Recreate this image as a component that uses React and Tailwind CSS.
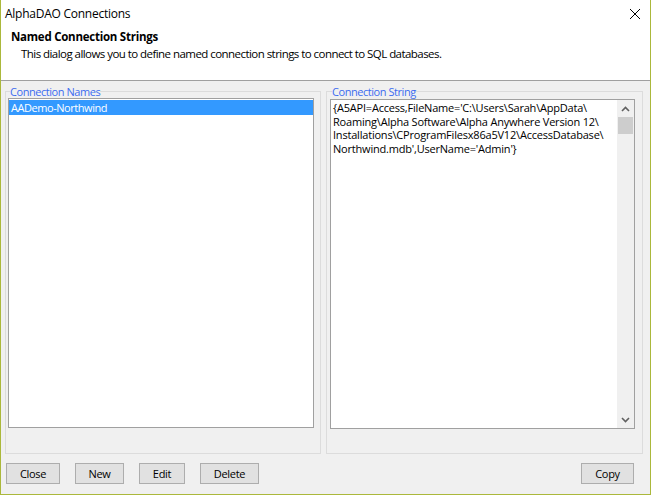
import React from "react";

const font = { fontFamily: '"Open Sans", "Noto Sans", sans-serif' };

// Connection string is shown pre-wrapped, the same way the edit control breaks it
const connLines = [
  "{A5API=Access,FileName='C:\\Users\\Sarah\\AppData\\",
  "Roaming\\Alpha Software\\Alpha Anywhere Version 12\\",
  "Installations\\CProgramFilesx86a5V12\\AccessDatabase\\",
  "Northwind.mdb',UserName='Admin'}",
];

const Chevron = ({ down }) => (
  <svg width="9" height="6" viewBox="0 0 9 6" className="block">
    <polyline
      points={down ? "1,1 4.5,4.5 8,1" : "1,5 4.5,1.5 8,5"}
      fill="none"
      stroke="#606060"
      strokeWidth="1.6"
    />
  </svg>
);

const Button = ({ label, width }) => (
  <button
    className={`h-[21px] ${width} bg-[#e1e1e1] border border-[#adadad] text-[11px] tracking-[-0.3px] text-black leading-none`}
  >
    {label}
  </button>
);

const App = () => {
  return (
    <div
      className="w-[651px] h-[495px] bg-[#f0f0f0] border-l border-r border-b border-[#abb83b] flex flex-col text-black overflow-hidden"
      style={font}
    >
      {/* Header */}
      <div className="h-[81px] bg-white border-b border-[#a0a0a0] shrink-0">
        <div className="flex items-center justify-between h-[27px] pl-[4px] pr-[9px]">
          <span className="text-[12px] tracking-[-0.25px]">AlphaDAO Connections</span>
          <svg width="12" height="12" viewBox="0 0 12 12">
            <line x1="1" y1="1" x2="11" y2="11" stroke="#000" strokeWidth="1" />
            <line x1="11" y1="1" x2="1" y2="11" stroke="#000" strokeWidth="1" />
          </svg>
        </div>
        <div className="pl-[10px] pt-[2px] text-[11.5px] tracking-[-0.25px] font-bold leading-[15px]">
          Named Connection Strings
        </div>
        <div className="pl-[20px] pt-[2px] text-[11.5px] tracking-[-0.55px] leading-[15px]">
          This dialog allows you to define named connection strings to connect to SQL databases.
        </div>
      </div>

      {/* Group boxes */}
      <div className="flex-1 flex gap-[5px] pl-[4px] pr-[7px] pt-[4px] min-h-0">
        <fieldset className="w-[316px] shrink-0 border border-[#dcdcdc] pl-[2px] pr-[6px] pb-[25px] flex flex-col min-h-0 min-w-0">
          <legend className="ml-[2px] px-0 text-[11px] tracking-[-0.45px] leading-[13px] text-[#3c6cf0]">
            Connection Names
          </legend>
          <div className="flex-1 bg-white border border-[#a0a0a0] pt-[1px]">
            <div className="h-[15px] bg-[#3399ff] text-white text-[11px] tracking-[-0.45px] leading-[15px] pl-[2px]">
              AADemo-Northwind
            </div>
          </div>
        </fieldset>

        <fieldset className="flex-1 min-w-0 border border-[#dcdcdc] pl-[3px] pr-[7px] pb-[24px] flex flex-col min-h-0">
          <legend className="ml-[2px] px-0 text-[11px] tracking-[-0.45px] leading-[13px] text-[#3c6cf0]">
            Connection String
          </legend>
          <div className="flex-1 bg-white border border-[#a0a0a0] flex min-h-0 mt-[1px]">
            <div className="flex-1 min-w-0 overflow-hidden pl-[2px] pt-[1px] text-[11px] tracking-[-0.2px] leading-[13.5px] whitespace-pre">
              {connLines.map((line, i) => (
                <div key={i}>{line}</div>
              ))}
            </div>
            <div className="w-[17px] shrink-0 bg-[#f0f0f0] flex flex-col items-center">
              <div className="h-[17px] flex items-center justify-center">
                <Chevron />
              </div>
              <div className="w-[15px] h-[17px] bg-[#cdcdcd]" />
              <div className="flex-1" />
              <div className="h-[17px] flex items-center justify-center">
                <Chevron down />
              </div>
            </div>
          </div>
        </fieldset>
      </div>

      {/* Buttons */}
      <div className="h-[40px] shrink-0 flex items-start pt-[9px] pl-[5px] pr-[16px]">
        <div className="flex gap-[15px]">
          <Button label="Close" width="w-[54px]" />
          <Button label="New" width="w-[49px]" />
          <Button label="Edit" width="w-[46px]" />
          <Button label="Delete" width="w-[59px]" />
        </div>
        <div className="flex-1" />
        <Button label="Copy" width="w-[53px]" />
      </div>
    </div>
  );
};

export default App;
